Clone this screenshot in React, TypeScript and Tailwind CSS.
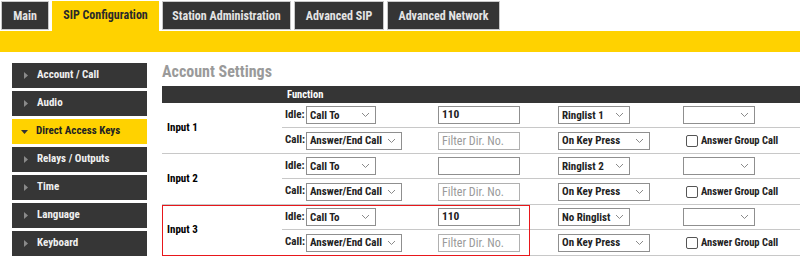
import React from "react";

const tabs = [
    { label: "Main", w: "w-[48px]" },
    { label: "SIP Configuration", w: "w-[107px]", active: true },
    { label: "Station Administration", w: "w-[129px]" },
    { label: "Advanced SIP", w: "w-[90px]" },
    { label: "Advanced Network", w: "w-[113px]" },
];

const menu = [
    "Account / Call",
    "Audio",
    "Direct Access Keys",
    "Relays / Outputs",
    "Time",
    "Language",
    "Keyboard",
];

const groups = [
    { name: "Input 1", number: "110", ringlist: "Ringlist 1", boxed: false },
    { name: "Input 2", number: "", ringlist: "Ringlist 2", boxed: false },
    { name: "Input 3", number: "110", ringlist: "No Ringlist", boxed: true },
];

function Chevron() {
    return (
        <svg width="9" height="6" viewBox="0 0 9 6" className="shrink-0">
            <path d="M1 1 L4.5 4.5 L8 1" fill="none" stroke="#8a8a8a" strokeWidth="1" />
        </svg>
    );
}

function Select({ value, width }: { value: string; width: string }) {
    return (
        <div
            className={`flex h-[18px] ${width} items-center justify-between whitespace-nowrap border border-[#8f8f8f] bg-white pl-[3px] pr-[5px] text-[11px] font-bold text-[#222]`}
        >
            <span className="leading-none">{value}</span>
            <Chevron />
        </div>
    );
}

function TextBox({ value }: { value: string }) {
    return (
        <div className="flex h-[18px] w-[82px] items-center border border-[#8f8f8f] bg-white pl-[3px] text-[11.5px] font-bold leading-none text-[#222]">
            {value}
        </div>
    );
}

function Placeholder() {
    return (
        <div className="flex h-[18px] w-[82px] items-center whitespace-nowrap border border-[#b0b0b0] bg-white pl-[3px] text-[12px] leading-none text-[#9a9a9a]">
            Filter Dir. No.
        </div>
    );
}

function Group({
    name,
    number,
    ringlist,
    boxed,
}: {
    name: string;
    number: string;
    ringlist: string;
    boxed: boolean;
}) {
    return (
        <div className="relative flex border-b border-[#c8c8c8]">
            <div className="flex w-[120px] items-center pl-[5px] text-[11px] font-bold text-black">
                {name}
            </div>
            <div className="flex flex-1 flex-col">
                <div className="flex h-[25px] items-center border-b border-[#c8c8c8]">
                    <div className="flex w-[156px] items-center">
                        <span className="w-[24px] pl-[3px] text-[11px] font-bold text-[#222]">Idle:</span>
                        <Select value="Call To" width="w-[70px]" />
                    </div>
                    <div className="w-[120px]">
                        <TextBox value={number} />
                    </div>
                    <div className="w-[125px]">
                        <Select value={ringlist} width="w-[72px]" />
                    </div>
                    <Select value="" width="w-[72px]" />
                </div>
                <div className="flex h-[25px] items-center">
                    <div className="flex w-[156px] items-center">
                        <span className="w-[24px] pl-[3px] text-[11px] font-bold text-[#222]">Call:</span>
                        <Select value="Answer/End Call" width="w-[96px]" />
                    </div>
                    <div className="w-[120px]">
                        <Placeholder />
                    </div>
                    <div className="w-[125px]">
                        <Select value="On Key Press" width="w-[92px]" />
                    </div>
                    <div className="flex items-center gap-[3px] pl-[3px]">
                        <span className="h-[12px] w-[12px] rounded-[2px] border border-[#555] bg-white" />
                        <span className="text-[10.5px] font-bold text-[#222]">Answer Group Call</span>
                    </div>
                </div>
            </div>
            {boxed && (
                <div className="pointer-events-none absolute left-0 top-0 h-[51px] w-[368px] border border-[#e8171b]" />
            )}
        </div>
    );
}

export default function App() {
    return (
        <div className="h-[258px] w-[800px] overflow-hidden bg-white font-['Roboto_Condensed',Roboto,sans-serif]">
            <div className="flex h-[31px] items-start gap-[3px] pl-[1px] pt-[1px]">
                {tabs.map((t) =>
                    t.active ? (
                        <div
                            key={t.label}
                            className={`flex h-[30px] ${t.w} items-center justify-center whitespace-nowrap bg-[#ffd200] pb-[2px] text-[12px] font-bold text-[#2a2a2a]`}
                        >
                            {t.label}
                        </div>
                    ) : (
                        <div
                            key={t.label}
                            className={`flex h-[29px] ${t.w} items-center justify-center whitespace-nowrap border border-[#c9c9c9] bg-[#353535] text-[12px] font-bold text-[#e4e4e4]`}
                        >
                            {t.label}
                        </div>
                    )
                )}
            </div>
            <div className="h-[21px] bg-[#ffd200]" />
            <div className="flex gap-[15px] pl-[12px] pt-[11px]">
                <div className="flex w-[135px] flex-col gap-[3px]">
                    {menu.map((m) =>
                        m === "Direct Access Keys" ? (
                            <div
                                key={m}
                                className="flex h-[25px] items-center bg-[#ffd200] text-[11px] font-bold text-[#222]"
                            >
                                <svg width="7" height="4" viewBox="0 0 7 4" className="ml-[9px] mr-[8px]">
                                    <path d="M0 0 L7 0 L3.5 4 Z" fill="#333" />
                                </svg>
                                {m}
                            </div>
                        ) : (
                            <div
                                key={m}
                                className="flex h-[25px] items-center bg-[#363636] text-[11px] font-bold text-[#f0f0f0]"
                            >
                                <svg width="4" height="7" viewBox="0 0 4 7" className="ml-[12px] mr-[9px]">
                                    <path d="M0 0 L4 3.5 L0 7 Z" fill="#8a8a8a" />
                                </svg>
                                {m}
                            </div>
                        )
                    )}
                </div>
                <div className="flex flex-1 flex-col">
                    <div className="h-[23px] text-[16px] font-bold leading-[18px] text-[#9a9a9a]">
                        Account Settings
                    </div>
                    <div className="flex h-[17px] items-center bg-[#353535] pl-[125px] text-[10.5px] font-bold text-white">
                        Function
                    </div>
                    {groups.map((g) => (
                        <Group key={g.name} {...g} />
                    ))}
                </div>
            </div>
        </div>
    );
}
